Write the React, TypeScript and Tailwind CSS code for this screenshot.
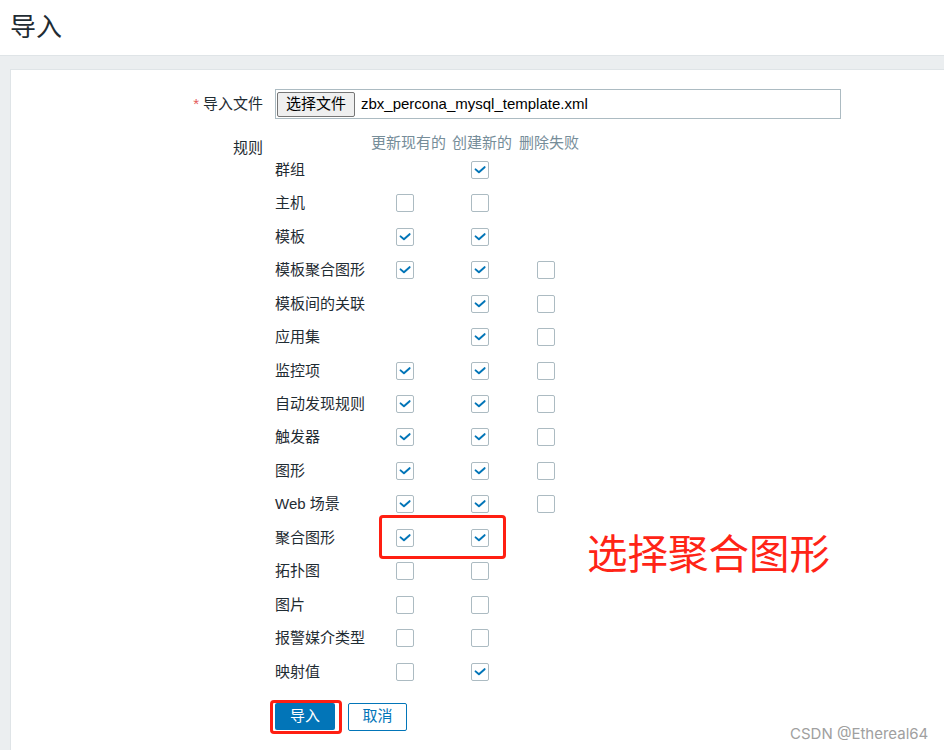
import React from "react";

type Row = { label: string; c: (0 | 1 | null)[] };

const rows: Row[] = [
  { label: "群组", c: [null, 1, null] },
  { label: "主机", c: [0, 0, null] },
  { label: "模板", c: [1, 1, null] },
  { label: "模板聚合图形", c: [1, 1, 0] },
  { label: "模板间的关联", c: [null, 1, 0] },
  { label: "应用集", c: [null, 1, 0] },
  { label: "监控项", c: [1, 1, 0] },
  { label: "自动发现规则", c: [1, 1, 0] },
  { label: "触发器", c: [1, 1, 0] },
  { label: "图形", c: [1, 1, 0] },
  { label: "Web 场景", c: [1, 1, 0] },
  { label: "聚合图形", c: [1, 1, null] },
  { label: "拓扑图", c: [0, 0, null] },
  { label: "图片", c: [0, 0, null] },
  { label: "报警媒介类型", c: [0, 0, null] },
  { label: "映射值", c: [0, 1, null] },
];

function Box({ checked }: { checked: boolean }) {
  return (
    <div className="w-[18px] h-[18px] border border-[#acbbc2] rounded-[2px] bg-white flex items-center justify-center">
      {checked && (
        <svg width="18" height="18" viewBox="0 0 18 18">
          <path d="M4 8.3 L7.8 11.6 L14.2 5.8" fill="none" stroke="#0275b8" strokeWidth="2.2" strokeLinecap="round" strokeLinejoin="round" />
        </svg>
      )}
    </div>
  );
}

const slotW = ["w-[75px]", "w-[66px]", "w-[40px]"];

export default function App() {
  return (
    <div
      className="relative w-[944px] h-[750px] overflow-hidden bg-white text-[#1f2c33]"
      style={{ fontFamily: '"Liberation Sans", "Noto Sans CJK SC", sans-serif' }}
    >
      <div className="h-[55px] flex items-center px-[10px]">
        <h1 className="text-[26px] leading-[30px] text-[#1f2c33] -mt-[2px]">导入</h1>
      </div>
      <div className="bg-[#ebeef0] border-t border-[#dfe4e7] pt-[13px] pl-[10px] h-[695px]">
        <div className="bg-white border-l border-t border-[#dfe4e7] h-full pt-[19px] text-[15px]">
          {/* file row */}
          <div className="flex items-center">
            <div className="w-[252px] text-right leading-[20px]">
              <span className="text-[#e45959] mr-[4px]">*</span>导入文件
            </div>
            <div className="ml-[12px] w-[566px] h-[30px] border border-[#acbbc2] flex items-center pl-[1px]">
              <div className="h-[25px] w-[78px] bg-[#efefef] border border-[#767676] rounded-[2px] flex items-center justify-center text-[15px] text-black">
                选择文件
              </div>
              <span className="ml-[6px] text-[15px] text-black">zbx_percona_mysql_template.xml</span>
            </div>
          </div>

          {/* rules */}
          <div className="flex mt-[14px]">
            <div className="w-[252px] text-right leading-[20px] pt-[5px]">规则</div>
            <div className="ml-[12px] flex flex-col">
              <div className="h-[21px] flex items-center pl-[96px] text-[#768d99] leading-[20px] -mt-[1px]">
                <span>更新现有的</span>
                <span className="ml-[6px]">创建新的</span>
                <span className="ml-[7px]">删除失败</span>
              </div>
              {rows.map((r, i) => (
                <div key={i} className="relative h-[33.47px] flex items-center">
                  <div className="w-[121px] leading-[20px]">{r.label}</div>
                  {r.c.map((v, j) => (
                    <div key={j} className={slotW[j]}>
                      {v !== null && <Box checked={v === 1} />}
                    </div>
                  ))}
                  {r.label === "聚合图形" && (
                    <>
                      <div className="absolute left-[104px] top-[-6px] w-[127px] h-[44px] border-[3px] border-[#ff1f12] rounded-[4px]" />
                      <div className="absolute left-[312px] top-[12px] text-[40.5px] leading-[44px] text-[#ff2416] whitespace-nowrap">
                        选择聚合图形
                      </div>
                    </>
                  )}
                </div>
              ))}
              <div className="flex items-center mt-[14px] gap-[13px]">
                <div className="relative">
                  <div className="w-[60px] h-[27px] bg-[#0275b8] rounded-[2px] text-white flex items-center justify-center">导入</div>
                  <div className="absolute left-[-5px] top-[-3px] w-[72px] h-[34px] border-[3px] border-[#ff1f12] rounded-[4px]" />
                </div>
                <div className="w-[59px] h-[28px] border border-[#0275b8] rounded-[2px] text-[#0275b8] bg-white flex items-center justify-center">取消</div>
              </div>
            </div>
          </div>
        </div>
      </div>
      <div className="absolute left-[790px] top-[724px] text-[15px] text-[#a0a0a0] leading-[20px]" style={{ fontFamily: '"Inter", "Liberation Sans", sans-serif' }}>
        CSDN @Ethereal64
      </div>
    </div>
  );
}
